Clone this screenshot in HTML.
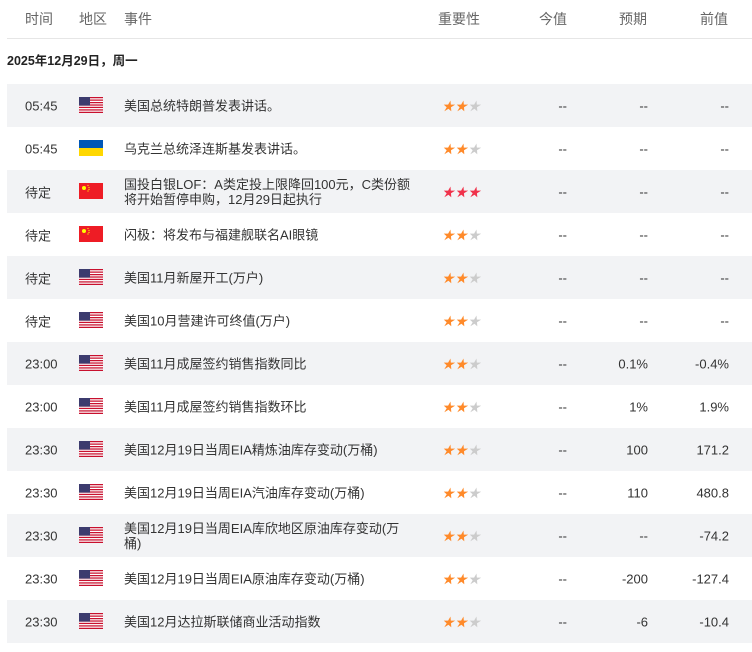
<!DOCTYPE html>
<html><head><meta charset="utf-8"><style>
*{margin:0;padding:0;box-sizing:border-box}
body{width:752px;height:652px;background:#fff;font-family:"Liberation Sans","Noto Sans CJK SC",sans-serif;color:#333;font-size:13px;position:relative;overflow:hidden}
.hd{position:absolute;left:7px;right:0;top:0;height:39px;border-bottom:1px solid #e6e6e6;color:#666;font-size:14px}
.hd span,.r span{position:absolute;top:50%;transform:translateY(-50%);white-space:nowrap}
.date{position:absolute;left:7px;top:40px;height:44px;line-height:42px;font-weight:bold;font-size:12.5px;color:#222}
.r{position:absolute;left:7px;right:0;height:43px}
.g{background:#f2f3f5}
.t{left:18px}
.f{left:72px;width:24px;height:16px}
.e{left:117px;line-height:15px}
.s{left:435px;font-size:12px;letter-spacing:1px}
.v1,.v2,.v3{text-align:right}
.v1{right:185px}.v2{right:104px}.v3{right:23px}
.o{color:#ff8a2a}.x{color:#ccc}.rd{color:#f0324b}
</style></head><body>
<svg width="0" height="0" style="position:absolute"><defs>
<g id="us"><rect width="24" height="16" fill="#fff"/><g fill="#c8102e"><rect y="0" width="24" height="1.25"/><rect y="2.5" width="24" height="1.25"/><rect y="5" width="24" height="1.25"/><rect y="7.4" width="24" height="1.25"/><rect y="9.8" width="24" height="1.25"/><rect y="12.3" width="24" height="1.25"/><rect y="14.75" width="24" height="1.25"/></g><rect width="11" height="8.6" fill="#3c3b6e"/></g>
<g id="ua"><rect width="24" height="8" fill="#0057b7"/><rect y="8" width="24" height="8" fill="#ffd700"/></g>
<g id="cn"><rect width="24" height="16" fill="#ee1c25"/><circle cx="5" cy="5" r="2" fill="#ff0"/><circle cx="9" cy="2.5" r=".6" fill="#ff0"/><circle cx="10" cy="4.5" r=".6" fill="#ff0"/><circle cx="10" cy="6.5" r=".6" fill="#ff0"/><circle cx="9" cy="8" r=".6" fill="#ff0"/></g>
</defs></svg>
<div class="hd"><span style="left:18px">时间</span><span style="left:72px">地区</span><span style="left:117px">事件</span><span style="left:431px">重要性</span><span style="left:532px">今值</span><span style="left:612px">预期</span><span style="left:693px">前值</span></div>
<div class="date">2025年12月29日，周一</div>

<div class="r g" style="top:84px"><span class="t">05:45</span><svg class="f" style="position:absolute;top:13px"><use href="#us"/></svg><span class="e">美国总统特朗普发表讲话。</span><span class="s"><i class="o">★★</i><i class="x">★</i></span><span class="v1">--</span><span class="v2">--</span><span class="v3">--</span></div>
<div class="r" style="top:127px"><span class="t">05:45</span><svg class="f" style="position:absolute;top:13px"><use href="#ua"/></svg><span class="e">乌克兰总统泽连斯基发表讲话。</span><span class="s"><i class="o">★★</i><i class="x">★</i></span><span class="v1">--</span><span class="v2">--</span><span class="v3">--</span></div>
<div class="r g" style="top:170px"><span class="t">待定</span><svg class="f" style="position:absolute;top:13px"><use href="#cn"/></svg><span class="e">国投白银LOF：A类定投上限降回100元，C类份额<br>将开始暂停申购，12月29日起执行</span><span class="s"><i class="rd">★★★</i></span><span class="v1">--</span><span class="v2">--</span><span class="v3">--</span></div>
<div class="r" style="top:213px"><span class="t">待定</span><svg class="f" style="position:absolute;top:13px"><use href="#cn"/></svg><span class="e">闪极：将发布与福建舰联名AI眼镜</span><span class="s"><i class="o">★★</i><i class="x">★</i></span><span class="v1">--</span><span class="v2">--</span><span class="v3">--</span></div>
<div class="r g" style="top:256px"><span class="t">待定</span><svg class="f" style="position:absolute;top:13px"><use href="#us"/></svg><span class="e">美国11月新屋开工(万户)</span><span class="s"><i class="o">★★</i><i class="x">★</i></span><span class="v1">--</span><span class="v2">--</span><span class="v3">--</span></div>
<div class="r" style="top:299px"><span class="t">待定</span><svg class="f" style="position:absolute;top:13px"><use href="#us"/></svg><span class="e">美国10月营建许可终值(万户)</span><span class="s"><i class="o">★★</i><i class="x">★</i></span><span class="v1">--</span><span class="v2">--</span><span class="v3">--</span></div>
<div class="r g" style="top:342px"><span class="t">23:00</span><svg class="f" style="position:absolute;top:13px"><use href="#us"/></svg><span class="e">美国11月成屋签约销售指数同比</span><span class="s"><i class="o">★★</i><i class="x">★</i></span><span class="v1">--</span><span class="v2">0.1%</span><span class="v3">-0.4%</span></div>
<div class="r" style="top:385px"><span class="t">23:00</span><svg class="f" style="position:absolute;top:13px"><use href="#us"/></svg><span class="e">美国11月成屋签约销售指数环比</span><span class="s"><i class="o">★★</i><i class="x">★</i></span><span class="v1">--</span><span class="v2">1%</span><span class="v3">1.9%</span></div>
<div class="r g" style="top:428px"><span class="t">23:30</span><svg class="f" style="position:absolute;top:13px"><use href="#us"/></svg><span class="e">美国12月19日当周EIA精炼油库存变动(万桶)</span><span class="s"><i class="o">★★</i><i class="x">★</i></span><span class="v1">--</span><span class="v2">100</span><span class="v3">171.2</span></div>
<div class="r" style="top:471px"><span class="t">23:30</span><svg class="f" style="position:absolute;top:13px"><use href="#us"/></svg><span class="e">美国12月19日当周EIA汽油库存变动(万桶)</span><span class="s"><i class="o">★★</i><i class="x">★</i></span><span class="v1">--</span><span class="v2">110</span><span class="v3">480.8</span></div>
<div class="r g" style="top:514px"><span class="t">23:30</span><svg class="f" style="position:absolute;top:13px"><use href="#us"/></svg><span class="e">美国12月19日当周EIA库欣地区原油库存变动(万<br>桶)</span><span class="s"><i class="o">★★</i><i class="x">★</i></span><span class="v1">--</span><span class="v2">--</span><span class="v3">-74.2</span></div>
<div class="r" style="top:557px"><span class="t">23:30</span><svg class="f" style="position:absolute;top:13px"><use href="#us"/></svg><span class="e">美国12月19日当周EIA原油库存变动(万桶)</span><span class="s"><i class="o">★★</i><i class="x">★</i></span><span class="v1">--</span><span class="v2">-200</span><span class="v3">-127.4</span></div>
<div class="r g" style="top:600px"><span class="t">23:30</span><svg class="f" style="position:absolute;top:13px"><use href="#us"/></svg><span class="e">美国12月达拉斯联储商业活动指数</span><span class="s"><i class="o">★★</i><i class="x">★</i></span><span class="v1">--</span><span class="v2">-6</span><span class="v3">-10.4</span></div>
</body></html>
